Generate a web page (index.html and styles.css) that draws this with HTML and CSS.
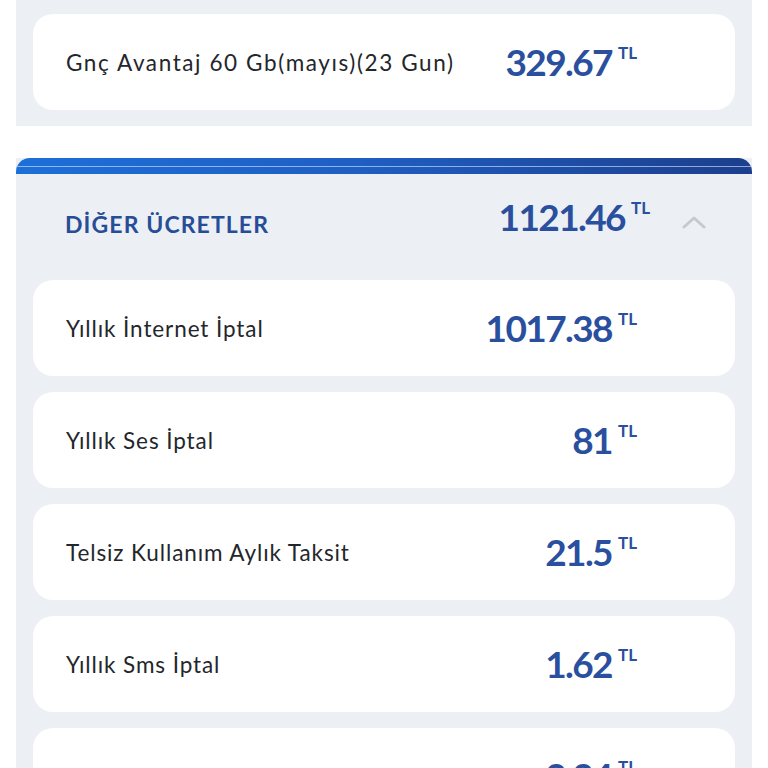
FILE: index.html
```html
<!DOCTYPE html>
<html lang="tr">
<head>
<meta charset="utf-8">
<link rel="stylesheet" href="styles.css">
</head>
<body>
<section class="panel panel-top">
  <div class="card">
    <span class="label">Gnç Avantaj 60 Gb(mayıs)(23 Gun)</span>
    <span class="amount"><span class="num">329.67</span><span class="cur">TL</span></span>
  </div>
</section>

<section class="panel panel-others">
  <div class="bar"><div class="bar-line"></div></div>
  <div class="head">
    <span class="head-title">DİĞER ÜCRETLER</span>
    <span class="head-right">
      <span class="amount"><span class="num">1121.46</span><span class="cur">TL</span></span>
      <svg class="chev" width="24" height="14" viewBox="0 0 24 14"><path d="M2 12 L12 3 L22 12" fill="none" stroke="#c5c9d0" stroke-width="3" stroke-linecap="round" stroke-linejoin="round"/></svg>
    </span>
  </div>
  <div class="list">
    <div class="card">
      <span class="label">Yıllık İnternet İptal</span>
      <span class="amount"><span class="num">1017.38</span><span class="cur">TL</span></span>
    </div>
    <div class="card">
      <span class="label">Yıllık Ses İptal</span>
      <span class="amount"><span class="num">81</span><span class="cur">TL</span></span>
    </div>
    <div class="card">
      <span class="label">Telsiz Kullanım Aylık Taksit</span>
      <span class="amount"><span class="num">21.5</span><span class="cur">TL</span></span>
    </div>
    <div class="card">
      <span class="label">Yıllık Sms İptal</span>
      <span class="amount"><span class="num">1.62</span><span class="cur">TL</span></span>
    </div>
    <div class="card">
      <span class="label">Yıllık Data Tarifesi</span>
      <span class="amount"><span class="num">2.24</span><span class="cur">TL</span></span>
    </div>
  </div>
</section>
</body>
</html>
```

FILE: styles.css
```css
html, body {
  margin: 0;
  padding: 0;
  background: #ffffff;
  font-family: "Lato", "Liberation Sans", sans-serif;
  overflow: hidden;
  height: 768px;
}

.panel {
  margin: 0 16px;
  background: #eceff3;
}

.panel-top {
  padding: 14px 17px 16px;
}

.panel-others {
  margin-top: 32px;
}

.bar {
  height: 16px;
  border-radius: 14px 14px 0 0;
  background: linear-gradient(90deg, #1d6fd8 0%, #1f5fc4 45%, #1d3f8c 100%);
  display: flex;
  flex-direction: column;
  justify-content: center;
}

.bar-line {
  height: 1px;
  background: rgba(190, 215, 255, 0.7);
  margin-top: 1px;
}

.head {
  height: 106px;
  display: flex;
  align-items: center;
  justify-content: space-between;
  padding: 0 46px 0 49px;
}

.head-title {
  color: #274d98;
  font-weight: 700;
  font-size: 23px;
  letter-spacing: 1.1px;
  margin-top: -6px;
}

.head-right {
  display: flex;
  align-items: center;
  gap: 32px;
}

.head-right .amount {
  margin-top: -20px;
}

.chev {
  display: block;
  margin-top: -10px;
}

.list {
  padding: 0 17px;
  display: flex;
  flex-direction: column;
  gap: 16px;
}

.card {
  background: #ffffff;
  border-radius: 20px;
  height: 96px;
  box-sizing: border-box;
  display: flex;
  align-items: center;
  justify-content: space-between;
  padding: 0 98px 0 33px;
}

.label {
  color: #23262b;
  font-size: 22.5px;
  font-weight: 400;
  letter-spacing: 0.9px;
  margin-top: 1px;
}

.panel-top .label {
  letter-spacing: 1.6px;
}

.list .card:last-child .label {
  margin-top: 30px;
}

.amount {
  display: flex;
  align-items: flex-start;
  color: #2a4f9e;
  font-weight: 700;
}

.num {
  font-size: 37px;
  line-height: 40px;
  letter-spacing: -1.6px;
}

.cur {
  font-size: 17px;
  line-height: 17px;
  margin-left: 6px;
  margin-top: 2px;
}
```
